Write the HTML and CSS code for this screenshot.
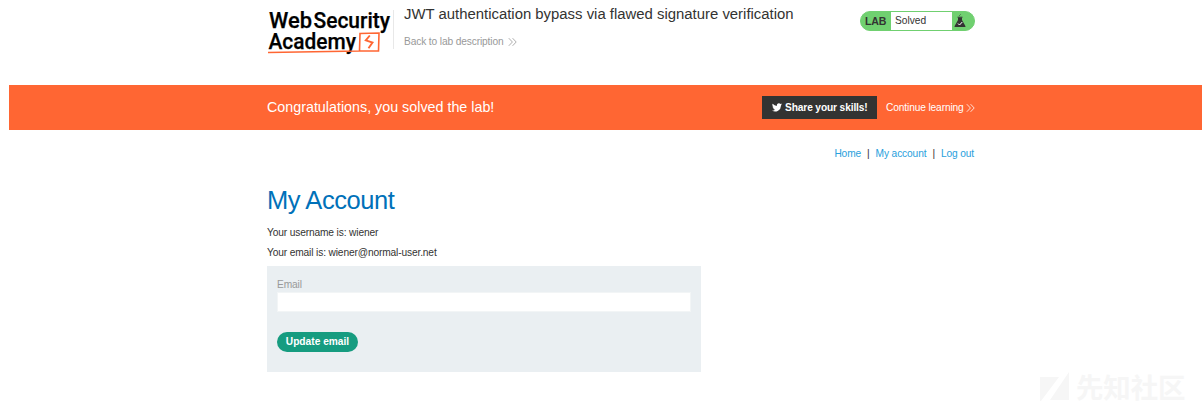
FILE: index.html
```html
<!DOCTYPE html>
<html lang="en">
<head>
<meta charset="utf-8">
<title>JWT authentication bypass via flawed signature verification</title>
<link rel="stylesheet" href="styles.css">
</head>
<body>
<header class="header container">
  <svg class="logo" width="126" height="48" viewBox="0 0 126 48">
    <g class="logo-text">
      <text x="2" y="21" textLength="43" lengthAdjust="spacingAndGlyphs">Web</text>
      <text x="46.500" y="21" textLength="76.500" lengthAdjust="spacingAndGlyphs">Security</text>
      <text x="1.500" y="41.500" textLength="87.500" lengthAdjust="spacingAndGlyphs">Academy</text>
    </g>
    <path class="logo-line" d="M1 45.500 L92.500 44 L93 26.500 L112 26 L111.500 44 L93 44"/>
    <path class="logo-bolt" d="M102.800 28.500 L98.800 33.300 L105.500 35.500 L101.500 41.200"/>
  </svg>
  <div class="title-block">
    <h2 class="title">JWT authentication bypass via flawed signature verification</h2>
    <a class="back">Back to lab description
      <svg width="9" height="8" viewBox="0 0 9 8"><path d="M.8.2 4.400 4 .8 7.800M4.600.2 8.200 4 4.600 7.800"/></svg>
    </a>
  </div>
  <div class="status">
    <span class="status-lab">LAB</span>
    <span class="status-text">Solved</span>
    <svg class="flask" width="12" height="14" viewBox="0 0 12 14">
      <path d="M4 3.500H8V6L11.500 12.300Q11.700 13 11 13H1Q.3 13 .5 12.300L4 6Z" fill="#333332"/>
      <path d="M3.500 3.200H8.500M5 1.500H5.600M6.500.5H7" stroke="#333332" stroke-width=".9"/>
      <path d="M4 9.500 5.500 11 8.300 8" fill="none" stroke="#fff" stroke-width="1"/>
    </svg>
  </div>
</header>
<section class="banner">
  <div class="container banner-inner">
    <h4 class="congrats">Congratulations, you solved the lab!</h4>
    <a class="share">
      <svg width="10" height="9" viewBox="0 0 24 20"><path fill="#fff" d="M24 2.400a10 10 0 0 1-2.800.8A5 5 0 0 0 23.300.500a10 10 0 0 1-3.100 1.200A4.900 4.900 0 0 0 11.800 6.200 14 14 0 0 1 1.700 1a4.900 4.900 0 0 0 1.500 6.600A5 5 0 0 1 1 7v.1a4.900 4.900 0 0 0 3.900 4.800 5 5 0 0 1-2.200.1 4.900 4.900 0 0 0 4.600 3.400A9.900 9.900 0 0 1 0 17.400 14 14 0 0 0 21.500 5z"/></svg>
      <span>Share your skills!</span>
    </a>
    <a class="continue">Continue learning
      <svg width="9" height="8" viewBox="0 0 9 8"><path d="M.8.2 4.400 4 .8 7.800M4.600.2 8.200 4 4.600 7.800"/></svg>
    </a>
  </div>
</section>
<main class="container">
  <nav class="nav"><a>Home</a><i>|</i><a>My account</a><i>|</i><a>Log out</a></nav>
  <h1 class="heading">My Account</h1>
  <p class="line">Your username is: wiener</p>
  <p class="line">Your email is: <span>wiener@normal-user.net</span></p>
  <form class="form">
    <label class="label" for="email">Email</label>
    <input class="input" id="email" type="email">
    <button class="button" type="button">Update email</button>
  </form>
</main>
<div class="watermark">
  <svg width="29" height="29" viewBox="0 0 29 29"><path fill="#f6f6f6" d="M0 5H19L1 29H0ZM29 0V28H10Z"/></svg>
  <span>先知社区</span>
</div>
</body>
</html>
```

FILE: styles.css
```css
* { box-sizing: border-box; }
body {
  margin: 0;
  height: 406px;
  overflow: hidden;
  position: relative;
  background: #fff;
  color: #333332;
  font: 10.200px/14px "Liberation Sans", Arial, sans-serif;
  letter-spacing: -.13px;
}
h1, h2, h4, p { margin: 0; font-weight: 400; }
.container { width: 708px; margin-left: 267px; }
.header { display: flex; height: 85px; padding-top: 7px; }
.logo { flex: none; overflow: visible; }
.logo-text { font: 500 22.500px Roboto, sans-serif; letter-spacing: 0; fill: #000; stroke: #000; stroke-width: .25; }
.logo-line { fill: none; stroke: #ff6633; stroke-width: 1.600; }
.logo-bolt { fill: none; stroke: #ff6633; stroke-width: 1.900; }
.title-block { height: 39px; margin-top: 3px; padding-left: 10px; border-left: 1px solid #e8e8e8; }
.title { font-size: 14.900px; line-height: 17px; letter-spacing: 0; margin-top: -4px; white-space: nowrap; }
.back { display: block; margin-top: 12px; color: #999; white-space: nowrap; }
.back svg, .continue svg { fill: none; stroke: currentColor; stroke-width: .8; vertical-align: -1px; }
.back svg { margin-left: 2px; }
.status {
  display: flex;
  align-items: center;
  width: 115px;
  height: 20px;
  margin: 4px 0 0 auto;
  border: 1px solid #70d070;
  border-radius: 10px;
  background: #70d070;
}
.status-lab { width: 30px; padding-left: 4px; font-size: 10.600px; font-weight: 700; }
.status-text { width: 61px; height: 18px; padding-left: 4px; line-height: 18px; letter-spacing: 0; background: #fff; }
.flask { margin-left: 2px; }
.banner { height: 45px; margin-left: 9px; background: #ff6633; color: #fff; }
.banner-inner { display: flex; align-items: center; height: 45px; margin-left: 258px; }
.congrats { padding-bottom: 2px; font-size: 14.300px; letter-spacing: 0; }
.share {
  display: flex;
  align-items: center;
  gap: 3px;
  width: 115px;
  height: 23px;
  margin-left: auto;
  padding-left: 10px;
  background: #333332;
  font-weight: 700;
  white-space: nowrap;
}
.continue { width: 89px; margin-left: 9px; white-space: nowrap; }
.nav { display: flex; justify-content: flex-end; margin-top: 17px; padding-right: 1px; color: #29a0dc; }
.nav i { margin: 0 6px; color: #333332; font-style: normal; }
.heading { margin-top: 24px; font-size: 25.500px; line-height: 30px; letter-spacing: -.45px; color: #0071b9; }
.line { margin-top: 11px; letter-spacing: -.14px; }
.line + .line { margin-top: 6px; }
.form { width: 434px; height: 106px; margin-top: 6px; padding: 12px 10px; background: #eaeff2; }
.label { display: block; color: #999; }
.input { display: block; width: 414px; height: 20px; border: 1px solid #f2f5f6; background: #fff; }
.button {
  width: 81px;
  height: 20px;
  margin-top: 20px;
  padding: 0;
  border: 0;
  border-radius: 10px;
  background: #169c80;
  color: #fff;
  font: 700 10.200px/20px "Liberation Sans", Arial, sans-serif;
}
.watermark {
  position: absolute;
  left: 1040px;
  top: 370px;
  display: flex;
  align-items: center;
  gap: 7px;
  color: #f6f6f6;
  font: 700 27.500px/32px "Noto Sans CJK SC", sans-serif;
}
```
